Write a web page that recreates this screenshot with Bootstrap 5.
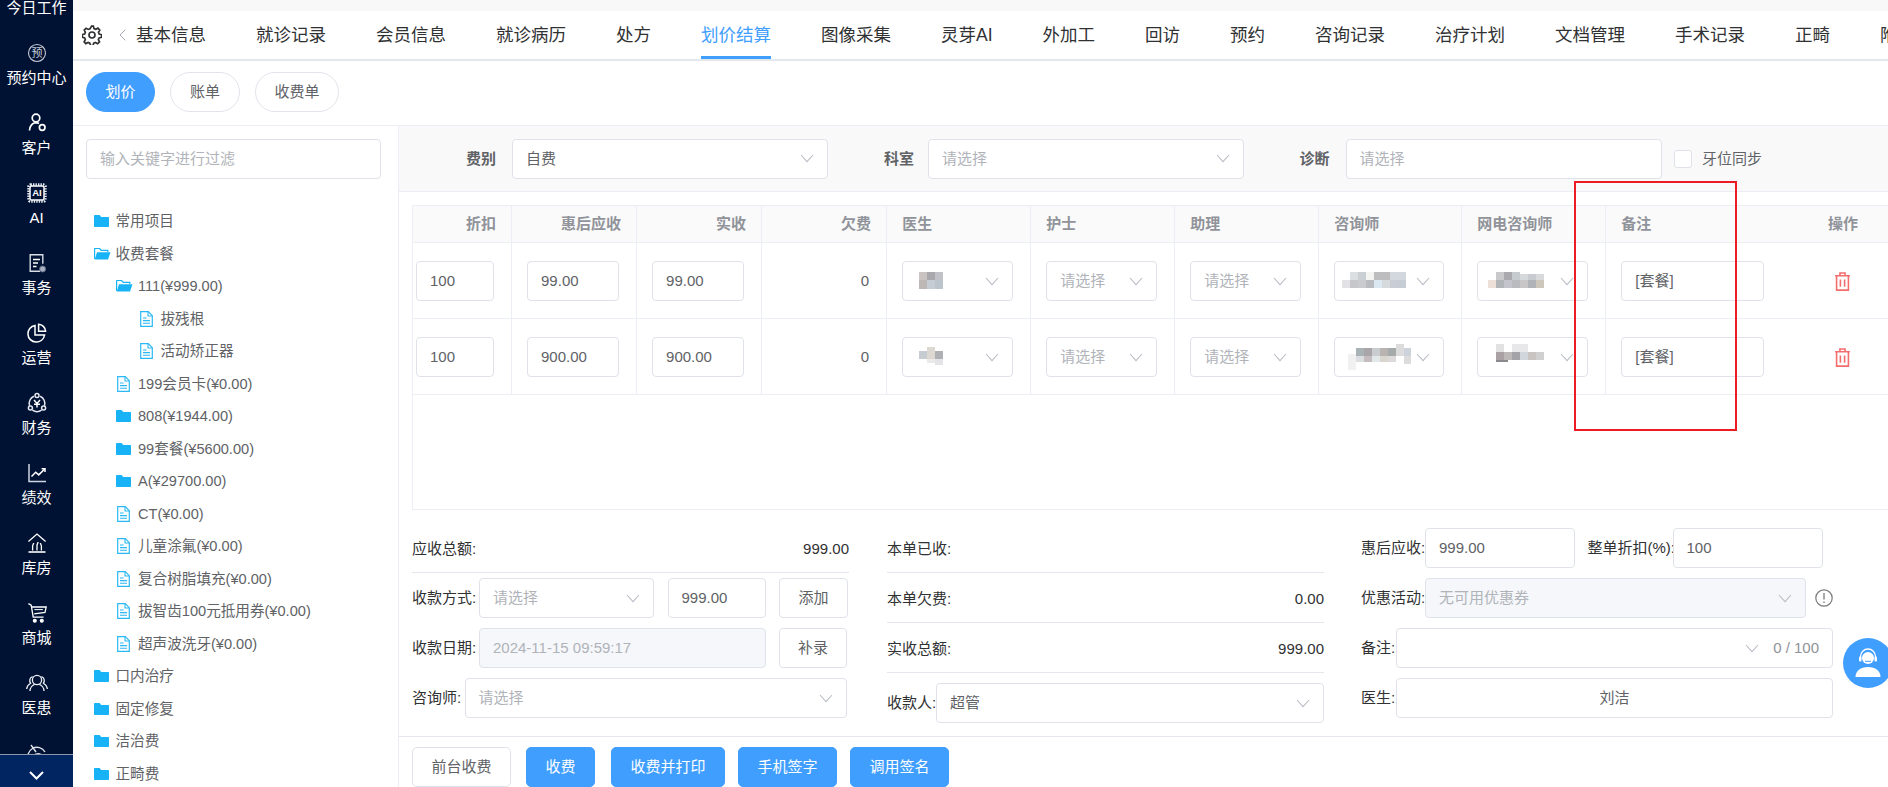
<!DOCTYPE html>
<html lang="zh">
<head>
<meta charset="utf-8">
<title>划价结算</title>
<link href="https://cdn.jsdelivr.net/npm/bootstrap@5.3.0/dist/css/bootstrap.min.css" rel="stylesheet">
<style>
html,body{height:787px;overflow:hidden}
body{position:relative;width:1888px;font-family:"Liberation Sans","Noto Sans CJK SC",sans-serif;font-size:15px;line-height:22px;color:#606266;background:#fff}
.side{width:73px;height:787px;background:#001233;color:#fff;flex:none}
.side-list{flex:1 1 auto;min-height:0;overflow:hidden}
.side-inner{margin-top:-40px}
.side-item{height:70px;padding-top:11px;text-align:center}
.side-item svg{display:block;margin:0 auto 2px;width:24px;height:24px}
.side-item .ico-gap{height:26px}
.side-more{height:34px;background:#002561;border-top:1px solid #8b98ae;padding-top:16px}
.main-col{width:1815px;height:787px;min-width:0}
.top-strip{height:11px;background:#f8f8f8}
.tabbar{height:50px;border-bottom:2px solid #e4e7ed;padding-left:9px;overflow:hidden}
.tabbar .gear{width:20px;height:20px;margin-right:17px;flex:none}
.tabbar .back{width:7px;height:12px;margin-right:10px;flex:none}
.tabset{gap:50px;flex-wrap:nowrap}
.tabset .nav-link{padding:0;height:48px;line-height:48px;font-size:17.5px;color:#303133;white-space:nowrap;border-bottom:2px solid transparent}
.tabset .nav-link.on{color:#409eff;border-bottom:3px solid #409eff}
.subtabs{height:65px;padding:11px 0 0 13px;gap:15px;border-bottom:1px solid #ebeef5}
.pillbtn{height:40px;border-radius:20px;border:1px solid #e1e4ea;font-size:15px;padding:0;color:#606266;line-height:38px;background:#fff}
.pillbtn.on{background:#409eff;border-color:#409eff;color:#fff}
.pw69{width:69px}.pw70{width:70px}.pw84{width:84px}
.work{height:661px;min-height:0}
.treepane{width:326px;flex:none;border-right:1px solid #ebeef5;padding-top:13px;overflow:hidden}
.filter-box{width:295px;margin-left:13px}
.fld{height:40px;border:1px solid #dfe2ea;border-radius:4px;background:#fff;padding:0 13px;font-size:15px;line-height:22px;color:#606266;flex:none;box-shadow:none}
.fld.form-control{min-height:0;padding:0 13px;font-size:15px;line-height:22px;color:#606266;border-color:#dfe2ea;border-radius:4px}
.fld.form-control.is-off{background:#f5f7fa;color:#b0b3b9}
.fld .ph,.fld.form-control.ph{color:#b0b3b9}
.chev{width:14px;height:9px;flex:none;margin-left:auto}
.tree{margin:26px 0 0 0;padding:0;list-style:none}
.tree li{height:32.5px;display:flex;align-items:center;font-size:14.6px;color:#606266;white-space:nowrap}
.tree .slot{width:22px;flex:none;display:flex}
.tree .slot-f{padding-left:1px}
.lv1{padding-left:20.5px}.lv2{padding-left:43px}.lv3{padding-left:67px}
.tree .lv3 .slot{width:20.5px}
.tree svg{display:block}
.pane{min-width:0;flex:1 1 auto}
.filterbar{height:66px;background:#f9f9f9;border-bottom:1px solid #ebeef5;font-weight:700;flex:none}
.flabel{text-align:right;flex:none;color:#606266}
.fl97{width:97px;margin-right:16px}.fl86{width:86px;margin-right:14px}.fl85{width:85.5px;margin-right:16px}
.w316{width:316px}
.fld.plainw{font-weight:400}
.tick{width:18px;height:18px;border:1px solid #dfe2ea;border-radius:3px;background:#fff;margin:0 10px 0 12.5px;flex:none}
.tick-t{font-weight:400}
.gridwrap{margin:13px 0 0 13px;height:305px;width:1476px;border:1px solid #ebeef5;border-right:0;overflow:hidden;flex:none}
.pricing{table-layout:fixed;width:1476px;margin:0;border-collapse:collapse;color:#606266}
.pricing th{height:36px;padding:0 15px;background:#fafafa;color:#909399;font-weight:700;font-size:15px;line-height:22px;border-bottom:1px solid #ebeef5;border-right:1px solid #ebeef5;white-space:nowrap;box-shadow:none;vertical-align:middle}
.pricing td{height:76px;padding:2px 17px 0 15px;border-bottom:1px solid #ebeef5;border-right:1px solid #ebeef5;vertical-align:middle;box-shadow:none;background:#fff;color:#606266}
.pricing .lastish,.pricing .endc{border-right:0}
.pricing td.firstc{padding-left:3px}
.pricing td.endc{padding:0;text-align:center}
.c100{width:98.5px}.c125{width:125px}.c144{width:144px}.c143{width:143px}.c191{width:191px}.c92{width:92px}
.w143{width:143px}
.blur{display:block;flex:none}
.summary{margin:13px 0 0 13px;flex:none}
.sumcol{width:437px;flex:none}
.gap38{margin-left:38px}.gap37{margin-left:37px}
.sumrow{height:50px;padding-top:5px;display:flex;align-items:flex-start;color:#303133}
.lab{flex:none;line-height:40px;color:#303133;white-space:nowrap}
.sumline{height:50px;border-bottom:1px solid #e4e7ed;display:flex;justify-content:space-between;align-items:center;padding-top:2px;color:#303133}
.sumend{height:50px;padding-top:10px;display:flex;align-items:flex-start}
.lab64{width:67px}.lab64b{width:64px}.lab48{width:52.5px}.lab48b{width:49px}.lab35{width:35px}.lab85{width:85px;margin-left:12.5px}
.w175{width:175px}.w98{width:98.5px;margin-left:13.5px}.w287{width:287px}.w382{width:382.5px}.w388{width:388px}
.w150{width:150px}.w380{width:380.5px}.w437{width:437px}
.smallbtn{height:40px;width:69px;padding:0;margin-left:13px;font-size:15px;line-height:38px;color:#606266;border:1px solid #dfe2ea;border-radius:4px;background:#fff;flex:none}
.w68{width:68px}
.sumcol3{width:480px;flex:none}
.inf{width:18px;height:18px;margin:11px 0 0 9px;flex:none}
.count{margin-left:14px;color:#909399;white-space:nowrap}
.footbar{margin-top:13px;border-top:1px solid #e4e7ed;padding:10px 0 0 13px;gap:13px;flex:none}
.act{height:40px;padding:0;font-size:15px;line-height:38px;border-radius:5px;border:1px solid #409eff;background:#409eff;color:#fff}
.act.pale{background:#fff;border-color:#dfe2ea;color:#606266}
.aw99{width:99px}.aw69{width:69px}.aw114{width:114px}
.xg2{margin-left:2px}.xg3{margin-left:3px}
.mark-box{position:absolute;left:1574px;top:181px;width:163px;height:250px;border:2px solid #ed1c24;pointer-events:none}
.helper{position:absolute;left:1843px;top:638px;width:50px;height:50px;border-radius:50%;background:#409eff}
.helper svg{display:block;margin:9px 0 0 9px}
</style>
</head>
<body class="d-flex">
<svg width="0" height="0" class="position-absolute">
  <defs>
    <symbol id="i-chev" viewBox="0 0 14 9"><path d="M1 1l6 6.600L13 1" fill="none" stroke="#b9bdc5" stroke-width="1.100"/></symbol>
    <symbol id="i-fold" viewBox="0 0 15 12"><path d="M0 1.200C0 .5.400 0 1 0h4.600l1.600 2H14c.6 0 1 .4 1 1v8c0 .6-.4 1-1 1H1c-.6 0-1-.4-1-1z" fill="#17b3f6"/></symbol>
    <symbol id="i-open" viewBox="0 0 17 12"><path d="M.6 11V1c0-.3.2-.5.5-.5h4.500L7.200 2.400h6.600V4" fill="none" stroke="#17b3f6" stroke-width="1.200"/><path d="M3 4.200h13.500L14 11.600H.8z" fill="#17b3f6"/></symbol>
    <symbol id="i-file" viewBox="0 0 13 16"><path d="M.7.7h7.600l4 4v10.600H.7z" fill="#fff" stroke="#2bb8f5" stroke-width="1.200"/><path d="M8 .8v4.200h4.200M3 7h3.600M3 9.600h7M3 12.200h7" fill="none" stroke="#2bb8f5" stroke-width="1.100"/></symbol>
    <symbol id="i-trash" viewBox="0 0 16 18"><path d="M1 3.600h14M5.600 3.400V1h4.800v2.400M2.400 3.800v13.400h11.200V3.800M6 7v7M10 7v7" fill="none" stroke="#f56c6c" stroke-width="1.500"/></symbol>
  </defs>
</svg>

<aside class="side d-flex flex-column">
  <div class="side-list">
    <div class="side-inner">
      <div class="side-item"><div class="ico-gap"></div><div>今日工作</div></div>
      <div class="side-item">
        <svg viewBox="0 0 24 24"><circle cx="12" cy="12" r="8.500" fill="none" stroke="#c6cbd6" stroke-width="1.100"/><text x="12" y="16" text-anchor="middle" font-size="11" fill="#c6cbd6">预</text></svg>
        <div>预约中心</div>
      </div>
      <div class="side-item">
        <svg viewBox="0 0 24 24" fill="none" stroke="#fff" stroke-width="1.700"><circle cx="11" cy="7" r="3.800"/><path d="M4.500 19.500c.5-4.500 3-7.500 6.500-7.800 1 0 2 .2 3 .8"/><circle cx="17.200" cy="16.500" r="2.800"/></svg>
        <div>客户</div>
      </div>
      <div class="side-item">
        <svg viewBox="0 0 24 24"><rect x="3.500" y="3.500" width="17" height="17" rx="2" fill="none" stroke="#e6ebf3" stroke-width="2.400" stroke-dasharray="1.400 1.100"/><rect x="5" y="5" width="14" height="14" rx="1.600" fill="#001233" stroke="#fff" stroke-width="1.500"/><text x="12" y="15.400" text-anchor="middle" font-size="9.500" font-weight="700" fill="#fff">AI</text></svg>
        <div>AI</div>
      </div>
      <div class="side-item">
        <svg viewBox="0 0 24 24" fill="none" stroke="#d8dde6" stroke-width="1.400"><path d="M15 20.200H5.200V3.800h12.600v9"/><path d="M8 8.500h7M8 12h5M8 15.500h3.500" stroke="#fff"/><circle cx="17.600" cy="18" r="3" fill="#a9b0c0" stroke="#5e6a85" stroke-width="1"/></svg>
        <div>事务</div>
      </div>
      <div class="side-item">
        <svg viewBox="0 0 24 24" fill="none" stroke="#fff" stroke-width="1.500"><path d="M10 4.400a8.400 8.400 0 1 0 9.600 9.600H10z"/><path d="M13.600 3.200a7.600 7.600 0 0 1 7 7h-7z"/></svg>
        <div>运营</div>
      </div>
      <div class="side-item">
        <svg viewBox="0 0 24 24" fill="none" stroke="#e6e9f0" stroke-width="1.500"><path d="M8.800 5.200a8 8 0 0 0-4.300 9.600M15.200 5.200a8 8 0 0 1 4.300 9.600M7.400 19.200a8 8 0 0 0 9.200 0"/><circle cx="12" cy="4.400" r="2"/><circle cx="5.400" cy="17" r="2"/><circle cx="18.600" cy="17" r="2"/><path d="M9 9l3 3.400L15 9M9 13.200h6M12 12.400v4" stroke="#fff"/></svg>
        <div>财务</div>
      </div>
      <div class="side-item">
        <svg viewBox="0 0 24 24" fill="none" stroke-width="1.500"><path d="M4 3v17.500h17" stroke="#cfd6e2"/><path d="M6.500 15.500l4.200-4.200 3 2.600 5.800-5.600" stroke="#fff"/><path d="M16.600 7.800h3.400v3.200" stroke="#fff"/></svg>
        <div>绩效</div>
      </div>
      <div class="side-item">
        <svg viewBox="0 0 24 24" fill="none" stroke="#fff" stroke-width="1.300"><path d="M3.400 10.600L12 3l8.600 7.600"/><path d="M3.500 21h17" stroke-width="1.600"/><path d="M7.600 19.500v-4.600c0-1 1-1.400 1-2.800M12 19.500v-5.200c0-1.200 1-1.800 1-3.400M16.400 19.500v-4.600c0-1-1-1.400-1-2.800"/></svg>
        <div>库房</div>
      </div>
      <div class="side-item">
        <svg viewBox="0 0 24 24" fill="none" stroke="#fff" stroke-width="1.300"><path d="M3.400 2.600l2.800 1.600 2 12h10.400"/><path d="M6.600 6h14.600l-1.200 5.400-10.800 1.400"/><path d="M9.400 8.600h8.400" stroke-width="1"/><circle cx="9.800" cy="19.800" r="1.400" fill="#fff"/><circle cx="16.800" cy="19.800" r="1.400" fill="#fff"/></svg>
        <div>商城</div>
      </div>
      <div class="side-item">
        <svg viewBox="0 0 24 24" fill="none" stroke="#eef0f5" stroke-width="1.300"><circle cx="12" cy="9" r="4.600"/><path d="M5 20c0-3.600 2.800-6 4.600-6.600M19 20c0-3.600-2.800-6-4.600-6.600"/><path d="M7.600 5.600C4.600 6.400 4 10 5.600 12.200 3.400 13.400 2 15.400 1.600 18M16.400 5.600c3 .8 3.600 4.400 2 6.600 2.200 1.200 3.600 3.200 4 5.800"/></svg>
        <div>医患</div>
      </div>
      <div class="side-item">
        <svg viewBox="0 0 24 24" fill="none" stroke="#dfe3ea" stroke-width="1.400"><path d="M4 20a9 9 0 0 1 16-9M7 20a6 6 0 0 1 10.500-5M10 20a3 3 0 0 1 5.200-2M6 4l5 7"/></svg>
      </div>
    </div>
  </div>
  <div class="side-more text-center"><svg width="15" height="9" viewBox="0 0 15 9" class="d-block mx-auto"><path d="M1 1l6.500 6.500L14 1" fill="none" stroke="#fff" stroke-width="2"/></svg></div>
</aside>

<div class="main-col d-flex flex-column">
  <div class="top-strip"></div>
  <div class="tabbar d-flex align-items-center">
    <svg class="gear" viewBox="0 0 24 24" fill="none" stroke="#303133" stroke-width="2"><path d="M12 1.800l2 .1.800 2.900 2 .9 2.700-1.400 2.100 2.300-1.500 2.600.8 2 2.900.9-.1 2.900-2.900.8-.9 2 1.400 2.700-2.200 2-2.600-1.400-2 .8-.9 2.900h-2.900l-.8-2.900-2-.8-2.700 1.400-2-2.100 1.400-2.600-.8-2-2.900-.9v-2.900l2.900-.8.800-2L3.400 6.500l2.100-2.100 2.600 1.400 2-.8z" transform="translate(-.7 -.6) scale(1.02)"/><circle cx="12" cy="12" r="3.600"/></svg>
    <svg class="back" viewBox="0 0 7 12"><path d="M6.300.7L1 6l5.300 5.300" fill="none" stroke="#a8abb2" stroke-width="1"/></svg>
    <ul class="nav tabset">
      <li class="nav-item"><a class="nav-link" href="#">基本信息</a></li>
      <li class="nav-item"><a class="nav-link" href="#">就诊记录</a></li>
      <li class="nav-item"><a class="nav-link" href="#">会员信息</a></li>
      <li class="nav-item"><a class="nav-link" href="#">就诊病历</a></li>
      <li class="nav-item"><a class="nav-link" href="#">处方</a></li>
      <li class="nav-item"><a class="nav-link on" href="#">划价结算</a></li>
      <li class="nav-item"><a class="nav-link" href="#">图像采集</a></li>
      <li class="nav-item"><a class="nav-link" href="#">灵芽AI</a></li>
      <li class="nav-item"><a class="nav-link" href="#">外加工</a></li>
      <li class="nav-item"><a class="nav-link" href="#">回访</a></li>
      <li class="nav-item"><a class="nav-link" href="#">预约</a></li>
      <li class="nav-item"><a class="nav-link" href="#">咨询记录</a></li>
      <li class="nav-item"><a class="nav-link" href="#">治疗计划</a></li>
      <li class="nav-item"><a class="nav-link" href="#">文档管理</a></li>
      <li class="nav-item"><a class="nav-link" href="#">手术记录</a></li>
      <li class="nav-item"><a class="nav-link" href="#">正畸</a></li>
      <li class="nav-item"><a class="nav-link" href="#">附件</a></li>
    </ul>
  </div>
  <div class="subtabs d-flex">
    <button class="btn pillbtn pw69 on">划价</button>
    <button class="btn pillbtn pw70">账单</button>
    <button class="btn pillbtn pw84">收费单</button>
  </div>

  <div class="work d-flex">
    <div class="treepane">
      <div class="form-control fld filter-box d-flex align-items-center ph">输入关键字进行过滤</div>
      <ul class="tree">
        <li class="lv1"><span class="slot"><svg width="15" height="12"><use href="#i-fold"/></svg></span>常用项目</li>
        <li class="lv1"><span class="slot"><svg width="17" height="12"><use href="#i-open"/></svg></span>收费套餐</li>
        <li class="lv2"><span class="slot"><svg width="17" height="12"><use href="#i-open"/></svg></span>111(¥999.00)</li>
        <li class="lv3"><span class="slot"><svg width="13" height="16"><use href="#i-file"/></svg></span>拔残根</li>
        <li class="lv3"><span class="slot"><svg width="13" height="16"><use href="#i-file"/></svg></span>活动矫正器</li>
        <li class="lv2"><span class="slot slot-f"><svg width="13" height="16"><use href="#i-file"/></svg></span>199会员卡(¥0.00)</li>
        <li class="lv2"><span class="slot"><svg width="15" height="12"><use href="#i-fold"/></svg></span>808(¥1944.00)</li>
        <li class="lv2"><span class="slot"><svg width="15" height="12"><use href="#i-fold"/></svg></span>99套餐(¥5600.00)</li>
        <li class="lv2"><span class="slot"><svg width="15" height="12"><use href="#i-fold"/></svg></span>A(¥29700.00)</li>
        <li class="lv2"><span class="slot slot-f"><svg width="13" height="16"><use href="#i-file"/></svg></span>CT(¥0.00)</li>
        <li class="lv2"><span class="slot slot-f"><svg width="13" height="16"><use href="#i-file"/></svg></span>儿童涂氟(¥0.00)</li>
        <li class="lv2"><span class="slot slot-f"><svg width="13" height="16"><use href="#i-file"/></svg></span>复合树脂填充(¥0.00)</li>
        <li class="lv2"><span class="slot slot-f"><svg width="13" height="16"><use href="#i-file"/></svg></span>拔智齿100元抵用券(¥0.00)</li>
        <li class="lv2"><span class="slot slot-f"><svg width="13" height="16"><use href="#i-file"/></svg></span>超声波洗牙(¥0.00)</li>
        <li class="lv1"><span class="slot"><svg width="15" height="12"><use href="#i-fold"/></svg></span>口内治疗</li>
        <li class="lv1"><span class="slot"><svg width="15" height="12"><use href="#i-fold"/></svg></span>固定修复</li>
        <li class="lv1"><span class="slot"><svg width="15" height="12"><use href="#i-fold"/></svg></span>洁治费</li>
        <li class="lv1"><span class="slot"><svg width="15" height="12"><use href="#i-fold"/></svg></span>正畸费</li>
      </ul>
    </div>

    <div class="pane d-flex flex-column">
      <div class="filterbar d-flex align-items-center">
        <div class="flabel fl97">费别</div>
        <div class="form-control fld plainw w316 d-flex align-items-center">自费<svg class="chev"><use href="#i-chev"/></svg></div>
        <div class="flabel fl86">科室</div>
        <div class="form-control fld plainw w316 d-flex align-items-center"><span class="ph">请选择</span><svg class="chev"><use href="#i-chev"/></svg></div>
        <div class="flabel fl85">诊断</div>
        <div class="form-control fld plainw w316 d-flex align-items-center ph">请选择</div>
        <span class="tick"></span><span class="tick-t">牙位同步</span>
      </div>

      <div class="gridwrap">
        <table class="table pricing">
          <colgroup><col class="c100"><col class="c125"><col class="c125"><col class="c125"><col class="c144"><col class="c144"><col class="c144"><col class="c143"><col class="c144"><col class="c191"><col class="c92"></colgroup>
          <thead>
            <tr>
              <th class="text-end">折扣</th><th class="text-end">惠后应收</th><th class="text-end">实收</th><th class="text-end">欠费</th>
              <th>医生</th><th>护士</th><th>助理</th><th>咨询师</th><th>网电咨询师</th><th class="lastish">备注</th><th class="endc text-center">操作</th>
            </tr>
          </thead>
          <tbody>
            <tr>
              <td class="firstc"><div class="form-control fld d-flex align-items-center">100</div></td>
              <td><div class="form-control fld d-flex align-items-center">99.00</div></td>
              <td><div class="form-control fld d-flex align-items-center">99.00</div></td>
              <td class="text-end">0</td>
              <td><div class="form-control fld d-flex align-items-center ps-2"><svg class="blur" width="50" height="18"><rect x="8" width="8" height="8" fill="#c9c4c2"/><rect x="16" width="8" height="8" fill="#a9a8ab"/><rect x="24" y="0" width="8" height="8" fill="#bfc3c8"/><rect x="8" y="8" width="8" height="9" fill="#bdb7b5"/><rect x="16" y="8" width="8" height="9" fill="#c6ccd4"/><rect x="24" y="8" width="8" height="9" fill="#bcc4cc"/></svg><svg class="chev"><use href="#i-chev"/></svg></div></td>
              <td><div class="form-control fld d-flex align-items-center"><span class="ph">请选择</span><svg class="chev"><use href="#i-chev"/></svg></div></td>
              <td><div class="form-control fld d-flex align-items-center"><span class="ph">请选择</span><svg class="chev"><use href="#i-chev"/></svg></div></td>
              <td><div class="form-control fld d-flex align-items-center ps-1"><svg class="blur" width="72" height="22"><rect x="3" y="10" width="8" height="8" fill="#e2e2e5"/><rect x="11" y="2" width="8" height="8" fill="#dcdfe2"/><rect x="19" y="2" width="8" height="8" fill="#c9cfd3"/><rect x="27" y="2" width="8" height="8" fill="#f4f5f3"/><rect x="35" y="2" width="16" height="8" fill="#bdbcbe"/><rect x="51" y="2" width="16" height="8" fill="#d3d8de"/><rect x="11" y="10" width="8" height="8" fill="#c6c7cb"/><rect x="19" y="10" width="8" height="8" fill="#c9cbcf"/><rect x="27" y="10" width="8" height="8" fill="#b8bcc0"/><rect x="35" y="10" width="8" height="8" fill="#dbe8f2"/><rect x="43" y="10" width="8" height="8" fill="#d6dadd"/><rect x="51" y="10" width="8" height="8" fill="#c8ced4"/><rect x="59" y="10" width="8" height="8" fill="#c6cdd4"/></svg><svg class="chev"><use href="#i-chev"/></svg></div></td>
              <td><div class="form-control fld d-flex align-items-center ps-1"><svg class="blur" width="72" height="22"><rect x="6" y="10" width="8" height="8" fill="#ece0d8"/><rect x="14" y="2" width="8" height="8" fill="#c9c9cb"/><rect x="22" y="2" width="8" height="8" fill="#aaa9ad"/><rect x="30" y="2" width="8" height="8" fill="#c5cbcf"/><rect x="38" y="4" width="8" height="6" fill="#d5d9dc"/><rect x="46" y="4" width="8" height="6" fill="#c8cbd0"/><rect x="54" y="4" width="8" height="6" fill="#d8dadc"/><rect x="14" y="10" width="8" height="8" fill="#b1b5b8"/><rect x="22" y="10" width="8" height="8" fill="#c3c4cc"/><rect x="30" y="10" width="8" height="8" fill="#b9bbbe"/><rect x="38" y="10" width="8" height="8" fill="#c8c6c6"/><rect x="46" y="10" width="8" height="8" fill="#b0b3b8"/><rect x="54" y="10" width="8" height="8" fill="#cdc6bb"/></svg><svg class="chev"><use href="#i-chev"/></svg></div></td>
              <td class="lastish"><div class="form-control fld w143 d-flex align-items-center">[套餐]</div></td>
              <td class="endc"><svg width="17" height="19"><use href="#i-trash"/></svg></td>
            </tr>
            <tr>
              <td class="firstc"><div class="form-control fld d-flex align-items-center">100</div></td>
              <td><div class="form-control fld d-flex align-items-center">900.00</div></td>
              <td><div class="form-control fld d-flex align-items-center">900.00</div></td>
              <td class="text-end">0</td>
              <td><div class="form-control fld d-flex align-items-center ps-2"><svg class="blur" width="50" height="20"><rect x="8" y="4" width="8" height="8" fill="#c6ccd2"/><rect x="16" y="0" width="8" height="12" fill="#ddd9d2"/><rect x="24" y="4" width="8" height="8" fill="#aeb0b4"/><rect x="16" y="12" width="8" height="4" fill="#ece9e9"/><rect x="24" y="12" width="8" height="6" fill="#e4e4e8"/></svg><svg class="chev"><use href="#i-chev"/></svg></div></td>
              <td><div class="form-control fld d-flex align-items-center"><span class="ph">请选择</span><svg class="chev"><use href="#i-chev"/></svg></div></td>
              <td><div class="form-control fld d-flex align-items-center"><span class="ph">请选择</span><svg class="chev"><use href="#i-chev"/></svg></div></td>
              <td><div class="form-control fld d-flex align-items-center ps-1"><svg class="blur" width="72" height="26"><rect x="9" y="10" width="8" height="16" fill="#f1f1f1"/><rect x="17" y="4" width="8" height="8" fill="#a9b3b6"/><rect x="25" y="4" width="8" height="8" fill="#a9a5a9"/><rect x="33" y="4" width="8" height="8" fill="#c9cdd0"/><rect x="41" y="4" width="8" height="8" fill="#b9b4b1"/><rect x="49" y="4" width="8" height="8" fill="#a7aaab"/><rect x="57" y="0" width="8" height="12" fill="#dcdcdc"/><rect x="65" y="4" width="7" height="8" fill="#cdd3da"/><rect x="17" y="12" width="8" height="6" fill="#dcdfe2"/><rect x="25" y="12" width="8" height="6" fill="#c4bcbf"/><rect x="33" y="12" width="8" height="6" fill="#e2e7ea"/><rect x="41" y="12" width="8" height="6" fill="#d9d5cf"/><rect x="49" y="12" width="8" height="6" fill="#dcdadb"/><rect x="65" y="12" width="7" height="8" fill="#dcdcdc"/></svg><svg class="chev"><use href="#i-chev"/></svg></div></td>
              <td><div class="form-control fld d-flex align-items-center ps-1"><svg class="blur" width="72" height="26"><rect x="14" y="0" width="8" height="8" fill="#e2e2e2"/><rect x="30" y="0" width="16" height="8" fill="#e8e8ea"/><rect x="14" y="8" width="8" height="8" fill="#a9a1a3"/><rect x="22" y="8" width="8" height="8" fill="#bdb9b9"/><rect x="30" y="8" width="8" height="8" fill="#a3a3a8"/><rect x="38" y="8" width="8" height="8" fill="#d0d6dc"/><rect x="46" y="8" width="8" height="8" fill="#c9c4c2"/><rect x="54" y="8" width="8" height="8" fill="#d0d0d0"/><rect x="14" y="16" width="12" height="2" fill="#8a8a8e"/></svg><svg class="chev"><use href="#i-chev"/></svg></div></td>
              <td class="lastish"><div class="form-control fld w143 d-flex align-items-center">[套餐]</div></td>
              <td class="endc"><svg width="17" height="19"><use href="#i-trash"/></svg></td>
            </tr>
          </tbody>
        </table>
      </div>

      <div class="summary d-flex">
        <div class="sumcol">
          <div class="sumline"><span>应收总额:</span><span>999.00</span></div>
          <div class="sumrow">
            <span class="lab lab64">收款方式:</span>
            <div class="form-control fld w175 d-flex align-items-center"><span class="ph">请选择</span><svg class="chev"><use href="#i-chev"/></svg></div>
            <div class="form-control fld w98 d-flex align-items-center">999.00</div>
            <button class="btn smallbtn">添加</button>
          </div>
          <div class="sumrow">
            <span class="lab lab64">收款日期:</span>
            <div class="form-control fld is-off w287 d-flex align-items-center">2024-11-15 09:59:17</div>
            <button class="btn smallbtn w68">补录</button>
          </div>
          <div class="sumrow">
            <span class="lab lab48">咨询师:</span>
            <div class="form-control fld w382 d-flex align-items-center"><span class="ph">请选择</span><svg class="chev"><use href="#i-chev"/></svg></div>
          </div>
        </div>
        <div class="sumcol gap38">
          <div class="sumline"><span>本单已收:</span></div>
          <div class="sumline"><span>本单欠费:</span><span>0.00</span></div>
          <div class="sumline"><span>实收总额:</span><span>999.00</span></div>
          <div class="sumend">
            <span class="lab lab48b">收款人:</span>
            <div class="form-control fld w388 d-flex align-items-center">超管<svg class="chev"><use href="#i-chev"/></svg></div>
          </div>
        </div>
        <div class="sumcol3 gap37">
          <div class="sumrow">
            <span class="lab lab64b">惠后应收:</span>
            <div class="form-control fld w150 d-flex align-items-center">999.00</div>
            <span class="lab lab85">整单折扣(%):</span>
            <div class="form-control fld w150 d-flex align-items-center">100</div>
          </div>
          <div class="sumrow">
            <span class="lab lab64b">优惠活动:</span>
            <div class="form-control fld is-off w380 d-flex align-items-center">无可用优惠券<svg class="chev"><use href="#i-chev"/></svg></div>
            <svg class="inf" viewBox="0 0 18 18"><circle cx="9" cy="9" r="8.200" fill="none" stroke="#7a7a7a" stroke-width="1.200"/><path d="M9 4v6.500M9 12.500v1.500" stroke="#7a7a7a" stroke-width="1.300"/></svg>
          </div>
          <div class="sumrow">
            <span class="lab lab35">备注:</span>
            <div class="form-control fld w437 d-flex align-items-center"><svg class="chev"><use href="#i-chev"/></svg><span class="count">0 / 100</span></div>
          </div>
          <div class="sumrow">
            <span class="lab lab35">医生:</span>
            <div class="form-control fld w437 d-flex align-items-center justify-content-center">刘洁</div>
          </div>
        </div>
      </div>

      <div class="footbar d-flex">
        <button class="btn act pale aw99">前台收费</button>
        <button class="btn act aw69 xg2">收费</button>
        <button class="btn act aw114 xg3">收费并打印</button>
        <button class="btn act aw99">手机签字</button>
        <button class="btn act aw99">调用签名</button>
      </div>
    </div>
  </div>
</div>

<div class="mark-box"></div>
<div class="helper">
  <svg width="32" height="32" viewBox="0 0 32 32" fill="none"><circle cx="16" cy="11" r="6" fill="#fff"/><path d="M8.500 12V9.500a7.500 7.500 0 0 1 15 0V12" stroke="#fff" stroke-width="1.300"/><rect x="7" y="9.500" width="2.500" height="5" rx="1" fill="#fff"/><rect x="22.500" y="9.500" width="2.500" height="5" rx="1" fill="#fff"/><path d="M3.500 30c0-6 5-10 12.500-10s12.500 4 12.500 10z" fill="#fff"/><path d="M13 14.300h6" stroke="#409eff" stroke-width="1"/></svg>
</div>
<script src="https://cdn.jsdelivr.net/npm/bootstrap@5.3.0/dist/js/bootstrap.bundle.min.js"></script>
</body>
</html>
